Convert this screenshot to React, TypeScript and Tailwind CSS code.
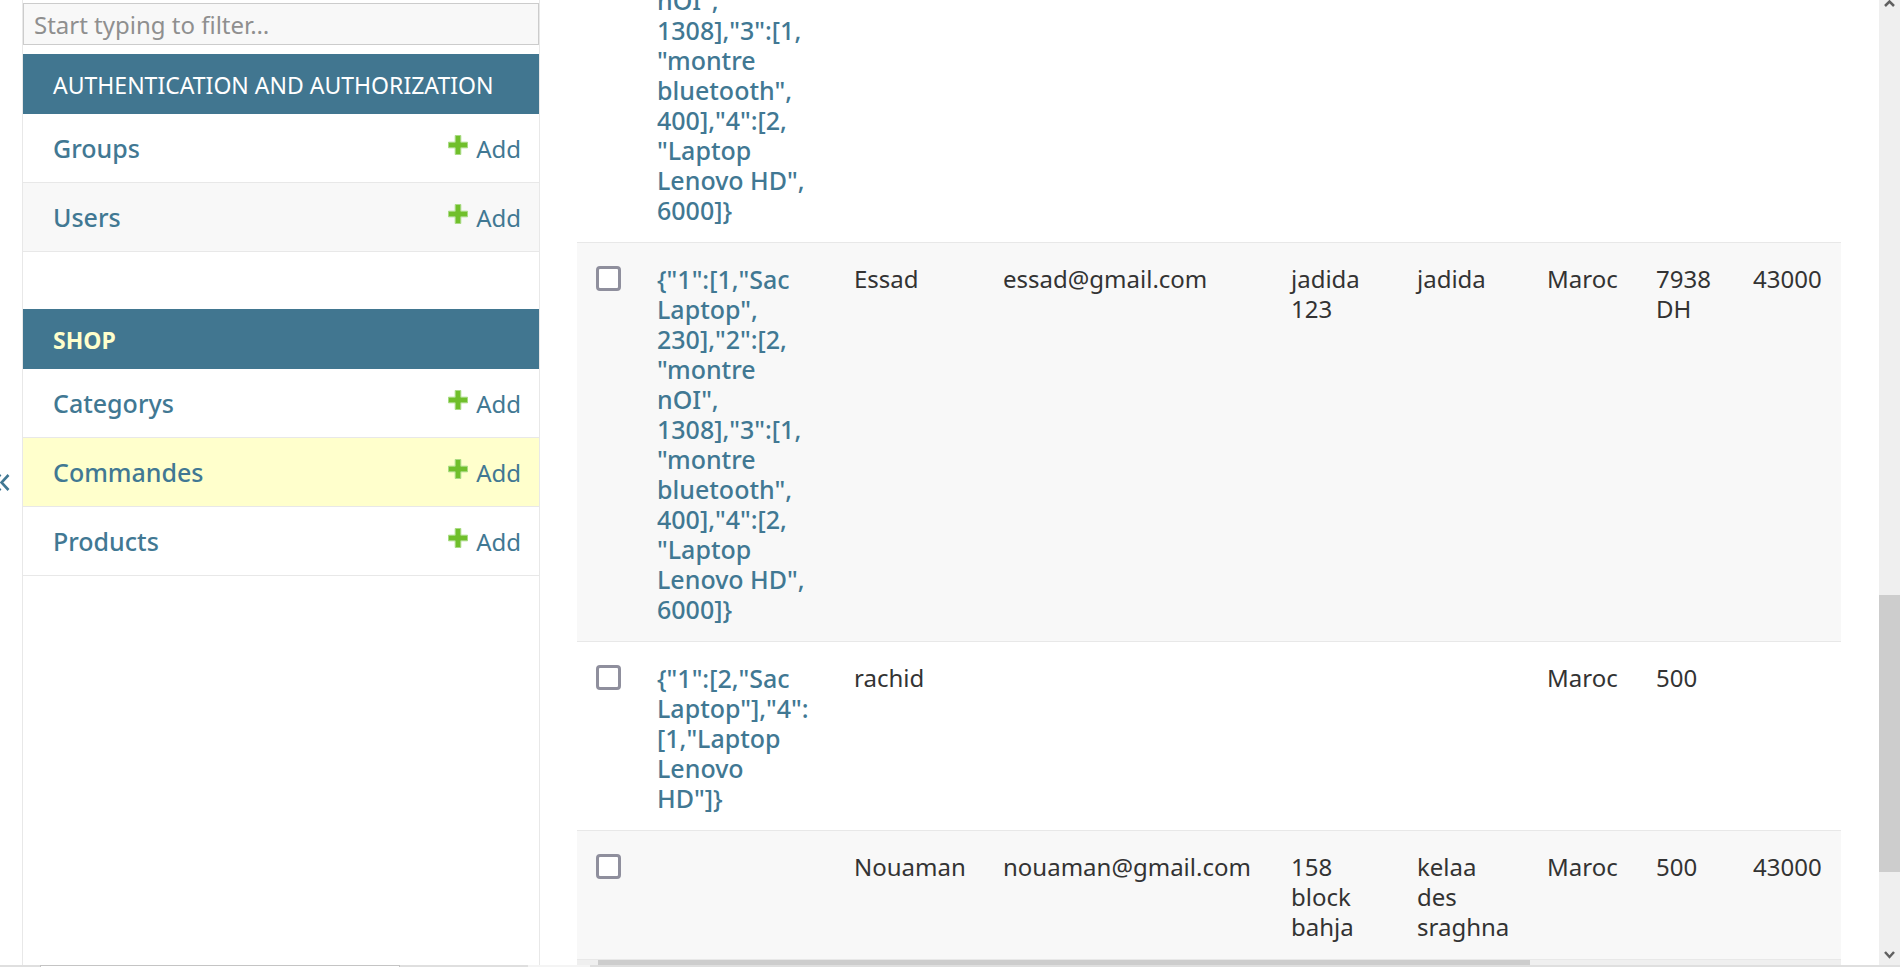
import React from "react";

type Order = {
  id: string;
  items: string;
  name?: string;
  email?: string;
  address?: string;
  city?: string;
  country?: string;
  total?: string;
  zip?: string;
};

const fullCart =
  '{"1":[1,"Sac\nLaptop",\n230],"2":[2,\n"montre\nnOI",\n1308],"3":[1,\n"montre\nbluetooth",\n400],"4":[2,\n"Laptop\nLenovo HD",\n6000]}';

const orders: Order[] = [
  {
    id: "first",
    items: fullCart,
  },
  {
    id: "essad",
    items: fullCart,
    name: "Essad",
    email: "essad@gmail.com",
    address: "jadida\n123",
    city: "jadida",
    country: "Maroc",
    total: "7938\nDH",
    zip: "43000",
  },
  {
    id: "rachid",
    items: '{"1":[2,"Sac\nLaptop"],"4":\n[1,"Laptop\nLenovo\nHD"]}',
    name: "rachid",
    country: "Maroc",
    total: "500",
  },
  {
    id: "nouaman",
    items: "",
    name: "Nouaman",
    email: "nouaman@gmail.com",
    address: "158\nblock\nbahja",
    city: "kelaa\ndes\nsraghna",
    country: "Maroc",
    total: "500",
    zip: "43000",
  },
];

function PlusIcon() {
  return (
    <svg className="mb-2 size-5" viewBox="0 0 20 20" aria-hidden="true">
      <path
        d="M7.200 0.500h5.600v6.700h6.700v5.600h-6.700v6.700H7.200v-6.700H0.500V7.200h6.700z"
        fill="#70bf2b"
        stroke="#a9db84"
        strokeWidth="1"
        strokeLinejoin="round"
      />
    </svg>
  );
}

function ModelRow({ name, tone }: { name: string; tone: string }) {
  return (
    <li className={"flex h-[69px] items-center justify-between border-b border-[#e8e8e8] pt-[2px] pr-[18px] pl-[30px] " + tone}>
      <a href="#" className="text-[25px] font-medium">
        {name}
      </a>
      <a href="#" className="flex items-center gap-2" aria-label={"Add " + name}>
        <PlusIcon />
        Add
      </a>
    </li>
  );
}

function Sidebar() {
  return (
    <nav className="w-[518px] shrink-0 border-x border-[#e8e8e8] pt-[3px] text-[#417893]">
      <input
        type="text"
        aria-label="Filter navigation items"
        placeholder="Start typing to filter…"
        className="mb-[9px] block h-[42px] w-full border border-[#ccc] bg-[#f8f8f8] px-[10px] text-[#333] placeholder-[#8f8f8f] outline-none"
      />
      <h2 className="flex h-[60px] items-center bg-[#417690] pt-[2px] pl-[30px] text-[23px] whitespace-nowrap text-white uppercase">
        <a href="#">Authentication and Authorization</a>
      </h2>
      <ul className="mb-[57px]">
        <ModelRow name="Groups" tone="bg-white" />
        <ModelRow name="Users" tone="bg-[#f8f8f8]" />
      </ul>
      <h2 className="flex h-[60px] items-center bg-[#417690] pt-[2px] pl-[30px] text-[23px] font-bold text-[#ffffcc] uppercase">
        <a href="#">Shop</a>
      </h2>
      <ul>
        <ModelRow name="Categorys" tone="bg-white" />
        <ModelRow name="Commandes" tone="bg-[#ffffcc]" />
        <ModelRow name="Products" tone="bg-white" />
      </ul>
    </nav>
  );
}

function OrdersTable() {
  return (
    <table className="w-full shrink-0 table-fixed border-collapse">
      <colgroup>
        <col className="w-[61px]" />
        <col className="w-[197px]" />
        <col className="w-[149px]" />
        <col className="w-[288px]" />
        <col className="w-[126px]" />
        <col className="w-[130px]" />
        <col className="w-[109px]" />
        <col className="w-[97px]" />
        <col className="w-[107px]" />
      </colgroup>
      <tbody>
        {orders.map((o) => (
          <tr
            key={o.id}
            className="border-b border-[#e8e8e8] align-top leading-[30px] whitespace-pre text-[#333] even:bg-[#f8f8f8]"
          >
            <td className="pt-[23px] pl-[19px]">
              <input
                type="checkbox"
                aria-label={"Select order " + (o.name ?? o.id)}
                className="block size-[25px] appearance-none rounded-[4px] border-[3px] border-[#8f8f9d] bg-white"
              />
            </td>
            <td className="pt-[21px] pb-[17px] pl-[19px] text-[25px] font-medium text-[#417893]">
              <a href="#">{o.items}</a>
            </td>
            <td className="pt-[21px] pb-[17px] pl-[19px]">{o.name}</td>
            <td className="pt-[21px] pb-[17px] pl-[19px]">{o.email}</td>
            <td className="pt-[21px] pb-[17px] pl-[19px]">{o.address}</td>
            <td className="pt-[21px] pb-[17px] pl-[19px]">{o.city}</td>
            <td className="pt-[21px] pb-[17px] pl-[19px]">{o.country}</td>
            <td className="pt-[21px] pb-[17px] pl-[19px]">{o.total}</td>
            <td className="pt-[21px] pb-[17px] pl-[19px]">{o.zip}</td>
          </tr>
        ))}
      </tbody>
    </table>
  );
}

function PageScrollbar() {
  return (
    <div className="flex w-[21px] shrink-0 flex-col bg-[#efefef] text-[#606060]">
      <svg className="h-[10px] w-full" viewBox="0 0 21 10" aria-hidden="true">
        <path d="M6 6l4.500-4.500L15 6" fill="none" stroke="currentColor" strokeWidth="2.500" />
      </svg>
      <div className="flex-[584]" />
      <div className="flex-[277] bg-[#cdcdcd]" />
      <div className="flex-[75]" />
      <svg className="h-[18px] w-full" viewBox="0 0 21 18" aria-hidden="true">
        <path d="M6 5l4.500 5L15 5" fill="none" stroke="currentColor" strokeWidth="2.500" />
      </svg>
    </div>
  );
}

export default function App() {
  return (
    <div className="flex h-screen flex-col overflow-hidden bg-white font-['Noto_Sans','Open_Sans',sans-serif] text-[24px]">
      <div className="flex min-h-0 flex-1">
        <button type="button" aria-label="Toggle navigation" className="flex w-[22px] shrink-0 items-center text-[#417893]">
          <svg className="h-5 w-[10px]" viewBox="0 0 10 20" aria-hidden="true">
            <path d="M8.500 2L1.500 9.500l7 7.500M0.500 1.500L-7 9.500l7.500 8" fill="none" stroke="currentColor" strokeWidth="2.600" />
          </svg>
        </button>
        <Sidebar />
        <main className="flex min-w-0 flex-1 flex-col justify-end overflow-hidden pr-[38px] pl-[37px]">
          <OrdersTable />
          <div className="flex h-[5px] shrink-0 bg-[#efefef] pl-[21px]">
            <div className="w-3/4 bg-[#cdcdcd]" />
          </div>
        </main>
        <PageScrollbar />
      </div>
      <footer className="flex h-[2px] shrink-0 bg-[#dfdfdf] pl-10">
        <div className="w-[360px] border border-b-0 border-[#c4c4c4] bg-white" />
        <div className="ml-[128px] w-[62px] bg-[#f4f4f4]" />
      </footer>
    </div>
  );
}
